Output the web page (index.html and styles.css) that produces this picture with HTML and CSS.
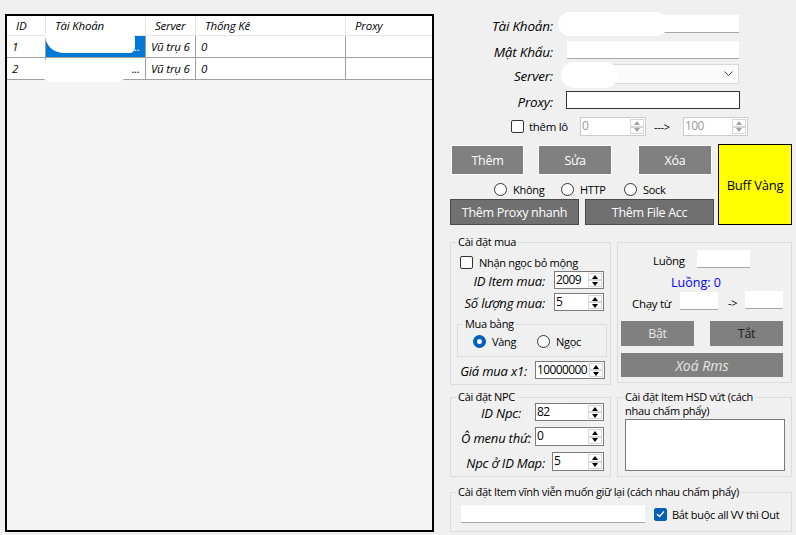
FILE: index.html
```html
<!DOCTYPE html>
<html lang="vi">
<head>
<meta charset="utf-8">
<title>Quản lý tài khoản</title>
<link rel="stylesheet" href="styles.css">
</head>
<body>
<div class="app">
  <div class="grid">
    <table class="dgv">
      <thead>
        <tr><th class="c-id">ID</th><th class="c-acc">Tài Khoản</th><th class="c-srv">Server</th><th class="c-st">Thống Kê</th><th class="c-px">Proxy</th></tr>
      </thead>
      <tbody>
        <tr><td>1</td><td class="acc sel"><span class="blob b1"></span><span class="ell">...</span></td><td>Vũ trụ 6</td><td>0</td><td></td></tr>
        <tr><td>2</td><td class="acc"><span class="blob b2"></span><span class="ell">...</span></td><td>Vũ trụ 6</td><td>0</td><td></td></tr>
      </tbody>
    </table>
  </div>

  <div class="panel">
    <div class="frow r1"><span class="flabel">Tài Khoản:</span><span class="field"><span class="blob b3"></span></span></div>
    <div class="frow r2"><span class="flabel">Mật Khẩu:</span><span class="field"></span></div>
    <div class="frow r3"><span class="flabel">Server:</span><span class="field combo"><span class="blob b4"></span><svg class="chev" width="9" height="6" viewBox="0 0 9 6"><polyline points="0.5,0.5 4.5,4.5 8.5,0.5" fill="none" stroke="#444" stroke-width="1"/></svg></span></div>
    <div class="frow r4"><span class="flabel">Proxy:</span><span class="field proxy"></span></div>

    <div class="lotrow">
      <span class="chk"></span><span class="lottext">thêm lô</span>
      <div class="num dis w66"><span class="nv">0</span><span class="spin"><i class="up"></i><i class="dn"></i></span></div>
      <span class="arrow">---&gt;</span>
      <div class="num dis w65"><span class="nv">100</span><span class="spin"><i class="up"></i><i class="dn"></i></span></div>
    </div>

    <div class="btnblock">
      <div class="btncol">
        <div class="brow1">
          <div class="btn b-gray bt-them">Thêm</div>
          <div class="btn b-gray bt-sua">Sửa</div>
          <div class="btn b-gray bt-xoa">Xóa</div>
        </div>
        <div class="radrow">
          <span class="ritem ri1"><span class="radio"></span>Không</span>
          <span class="ritem ri2"><span class="radio"></span>HTTP</span>
          <span class="ritem"><span class="radio"></span>Sock</span>
        </div>
        <div class="brow2">
          <div class="btn b-dark">Thêm Proxy nhanh</div>
          <div class="btn b-dark">Thêm File Acc</div>
        </div>
      </div>
      <div class="buff">Buff Vàng</div>
    </div>

    <div class="grow1">
      <fieldset class="grp g-mua">
        <legend>Cài đặt mua</legend>
        <div class="chkrow"><span class="chk"></span><span class="chklabel">Nhận ngọc bỏ mộng</span></div>
        <div class="lrow lr-id"><span class="ilabel w94">ID Item mua:</span><div class="num w50 ml9"><span class="nv">2009</span><span class="spin"><i class="up"></i><i class="dn"></i></span></div></div>
        <div class="lrow lr-sl"><span class="ilabel w94">Số lượng mua:</span><div class="num w50 ml9"><span class="nv">5</span><span class="spin"><i class="up"></i><i class="dn"></i></span></div></div>
        <fieldset class="grp g-muabang">
          <legend>Mua bằng</legend>
          <div class="mbrow">
            <span class="ritem mb1"><span class="radio on"></span>Vàng</span>
            <span class="ritem"><span class="radio"></span>Ngọc</span>
          </div>
        </fieldset>
        <div class="lrow lr-gia"><span class="ilabel w76">Giá mua x1:</span><div class="num w70 ml8"><span class="nv">10000000</span><span class="spin"><i class="up"></i><i class="dn"></i></span></div></div>
      </fieldset>

      <fieldset class="grp g-luong">
        <div class="lu-row1"><span class="lu-t">Luồng</span><span class="field w53"></span></div>
        <div class="lu-count">Luồng: 0</div>
        <div class="lu-row3"><span class="lu-chay">Chạy từ</span><span class="field w38 h18"></span><span class="lu-arr">-&gt;</span><span class="field w38 h18 up1"></span></div>
        <div class="lu-btns">
          <div class="btn b-flat t-light">Bật</div>
          <div class="btn b-flat t-dark ml16">Tắt</div>
        </div>
        <div class="btn b-flat t-light xrms">Xoá Rms</div>
      </fieldset>
    </div>

    <div class="grow2">
      <fieldset class="grp g-npc">
        <legend>Cài đặt NPC</legend>
        <div class="lrow nr1"><span class="ilabel w70">ID Npc:</span><div class="num w69 ml14"><span class="nv">82</span><span class="spin"><i class="up"></i><i class="dn"></i></span></div></div>
        <div class="lrow nr2"><span class="ilabel w80">Ô menu thứ:</span><div class="num w69 ml4"><span class="nv">0</span><span class="spin"><i class="up"></i><i class="dn"></i></span></div></div>
        <div class="lrow nr3"><span class="ilabel w94">Npc ở ID Map:</span><div class="num w52 ml7"><span class="nv">5</span><span class="spin"><i class="up"></i><i class="dn"></i></span></div></div>
      </fieldset>
      <fieldset class="grp g-hsd">
        <legend>Cài đặt Item HSD vứt (cách</legend>
        <div class="hsd-l2">nhau chấm phẩy)</div>
        <div class="textarea"></div>
      </fieldset>
    </div>

    <fieldset class="grp g-vv">
      <legend>Cài đặt Item vĩnh viễn muốn giữ lại (cách nhau chấm phẩy)</legend>
      <div class="vvrow">
        <span class="field vvin"></span>
        <span class="chk on"><svg width="9" height="8" viewBox="0 0 9 8"><polyline points="1,4 3.5,6.5 8,1.5" fill="none" stroke="#fff" stroke-width="1.3"/></svg></span>
        <span class="vvtext">Bắt buộc all VV thì Out</span>
      </div>
    </fieldset>
  </div>
</div>
</body>
</html>
```

FILE: styles.css
```css
* { box-sizing: border-box; }
html, body { margin: 0; padding: 0; }
body {
  width: 796px;
  height: 535px;
  overflow: hidden;
  background: #f0f0f0;
  font-family: "Open Sans", "Noto Sans", sans-serif;
  font-size: 11px;
  letter-spacing: -0.3px;
  color: #000;
}
.app { display: flex; align-items: flex-start; }

/* ---------- data grid ---------- */
.grid {
  margin: 14px 0 0 5px;
  width: 429px;
  height: 518px;
  border: 2px solid #000;
  background: #f4f4f4;
}
.dgv {
  border-collapse: separate;
  border-spacing: 0;
  table-layout: fixed;
  width: 425px;
  font-style: italic;
  font-size: 11.5px;
  letter-spacing: -0.2px;
}
.dgv th {
  height: 20px;
  background: #fff;
  font-weight: normal;
  text-align: left;
  padding: 0 0 0 9px;
  border-right: 1px solid #e5e5e5;
  border-bottom: 1px solid #e5e5e5;
  white-space: nowrap;
}
.dgv th.c-id { width: 39px; }
.dgv th.c-acc { width: 100px; }
.dgv th.c-srv { width: 50px; }
.dgv th.c-st { width: 150px; }
.dgv th.c-px { border-right: 0; }
.dgv td {
  height: 22px;
  background: #fff;
  padding: 0 0 0 5px;
  border-right: 1px solid #a0a0a0;
  border-bottom: 1px solid #a0a0a0;
  white-space: nowrap;
  overflow: visible;
}
.dgv td:last-child { border-right: 0; }
.dgv td.acc { position: relative; }
.dgv td.sel { background: #0078d7; color: #fff; }
.ell { position: absolute; right: 5px; top: 3px; }
.sel .ell { color: #fff; }
.blob { position: absolute; background: #fff; }
.b1 { left: -1px; top: -3px; width: 90px; height: 20px; border-radius: 4px 12px 12px 40px; }
.b2 { left: -6px; top: 0; width: 88px; height: 24px; border-radius: 12px; }
.b3 { left: -9px; top: -3px; width: 110px; height: 24px; border-radius: 12px; }
.b4 { left: -7px; top: -3px; width: 57px; height: 26px; border-radius: 13px; }

/* ---------- right panel ---------- */
.panel {
  margin-left: 11px;
  width: 352px;
  padding-top: 15px;
  display: flex;
  flex-direction: column;
}
.frow { display: flex; align-items: center; }
.r1 { height: 18px; }
.r2 { height: 18px; margin-top: 8px; }
.r3 { height: 20px; margin-top: 5px; }
.r4 { height: 18px; margin-top: 7px; }
.flabel {
  width: 108px;
  text-align: right;
  font-style: italic;
  font-size: 13.5px;
  letter-spacing: -0.2px;
  padding-top: 3px;
}
.field {
  display: block;
  position: relative;
  background: #fff;
  border-bottom: 1px solid #a8a8a8;
}
.frow .field { margin-left: 14px; width: 172px; height: 100%; }
.combo { background: #fbfbfb; border: 1px solid #d9d9d9; }
.chev { position: absolute; right: 5px; top: 6px; }
.frow .proxy { border: 1px solid #333; width: 174px; margin-left: 13px; }

.lotrow { display: flex; align-items: center; height: 19px; margin-top: 8px; }
.lotrow .chk { margin-left: 66px; }
.lottext { margin-left: 5px; width: 51px; font-size: 11.5px; }
.arrow { margin-left: 8px; width: 29px; }

.chk {
  width: 13px; height: 13px;
  border: 1px solid #333;
  border-radius: 2px;
  background: #fff;
  flex: none;
  display: flex; align-items: center; justify-content: center;
}
.chk.on { background: #005fb8; border-color: #005fb8; }

/* numeric up-down */
.num {
  display: flex;
  background: #fff;
  border: 1px solid #7a7a7a;
  height: 100%;
  flex: none;
}
.nv { flex: 1; padding-left: 1px; font-size: 12px; letter-spacing: -0.6px; line-height: 16px; white-space: nowrap; overflow: hidden; }
.spin { width: 15px; display: flex; flex-direction: column; padding: 1px 1px 1px 0; }
.spin i { flex: 1; border: 1px solid #d6d6d6; display: flex; align-items: center; justify-content: center; }
.spin i::after { content: ""; border-left: 3px solid transparent; border-right: 3px solid transparent; }
.spin i.up::after { border-bottom: 4px solid #000; }
.spin i.dn::after { border-top: 4px solid #000; }
.num.dis { border-color: #cccccc; }
.num.dis .nv { color: #9a9a9a; }
.num.dis .spin i.up::after { border-bottom-color: #a0a0a0; }
.num.dis .spin i.dn::after { border-top-color: #a0a0a0; }

.w38 { width: 38px; }
.w50 { width: 50px; }
.w52 { width: 52px; }
.w53 { width: 53px; }
.w65 { width: 65px; }
.w66 { width: 66px; }
.w69 { width: 69px; }
.w70 { width: 70px; }
.w76 { width: 76px; }
.w80 { width: 80px; }
.w94 { width: 94px; }
.ml4 { margin-left: 4px; }
.ml7 { margin-left: 7px; }
.ml8 { margin-left: 8px; }
.ml9 { margin-left: 9px; }
.ml14 { margin-left: 14px; }
.ml16 { margin-left: 16px; }
.h18 { height: 18px; }

/* buttons */
.btnblock { display: flex; margin-top: 8px; }
.btncol { width: 273px; }
.brow1 { display: flex; height: 30px; margin-top: 1px; }
.btn {
  display: flex; align-items: center; justify-content: center;
  font-size: 12.5px; white-space: nowrap;
}
.b-gray { background: #808080; border: 1px solid #fff; color: #fff; }
.bt-them { margin-left: 6px; width: 73px; }
.bt-sua { margin-left: 14px; width: 74px; }
.bt-xoa { margin-left: 26px; width: 74px; }
.radrow { display: flex; align-items: center; height: 14px; margin-top: 7px; padding-left: 49px; font-size: 11px; }
.ritem { display: flex; align-items: center; white-space: nowrap; }
.ri1 { width: 67px; }
.ri2 { width: 63px; }
.radio {
  width: 13px; height: 13px;
  border: 1px solid #333;
  border-radius: 50%;
  background: #fff;
  margin-right: 6px;
  flex: none;
}
.radio.on { background: #fff; border: 4px solid #005fb8; }
.brow2 { display: flex; gap: 6px; margin-top: 3px; padding-left: 5px; height: 26px; }
.b-dark { width: 129px; background: #707070; border: 1px solid #4a4a4a; color: #fff; }
.buff {
  width: 74px; height: 81px;
  background: #ffff00;
  border: 1px solid #000;
  display: flex; align-items: center; justify-content: center;
  font-size: 13px;
  letter-spacing: -0.2px;
}

/* group boxes */
.grp {
  margin: 0;
  padding: 0;
  border: 1px solid #dcdcdc;
  min-width: 0;
}
.grp legend {
  margin-left: 5px;
  padding: 0 2px;
  line-height: 14px;
  font-size: 11px;
  white-space: nowrap;
}
.grow1 { display: flex; align-items: flex-start; margin-top: 10px; }
.g-mua { margin-left: 5px; width: 161px; height: 150px; }
.chkrow { display: flex; align-items: center; height: 15px; margin-top: 6px; padding-left: 9px; }
.chklabel { margin-left: 6px; font-size: 11px; white-space: nowrap; }
.lrow { display: flex; align-items: center; height: 18px; }
.ilabel { text-align: right; font-style: italic; font-size: 13px; letter-spacing: -0.2px; padding-top: 2px; white-space: nowrap; }
.lr-id { margin-top: 1px; }
.lr-sl { margin-top: 4px; }
.g-muabang { margin: 6px 0 0 6px; width: 150px; height: 40px; }
.mbrow { display: flex; align-items: center; height: 14px; margin-top: 3px; padding-left: 15px; font-size: 11px; }
.mb1 { width: 64px; }
.lr-gia { margin-top: 4px; }

.g-luong { margin: 7px 0 0 6px; width: 175px; height: 141px; }
.lu-row1 { display: flex; align-items: center; height: 18px; margin-top: 7px; padding-left: 35px; }
.lu-t { width: 44px; padding-top: 3px; font-size: 11.5px; }
.lu-row1 .field { height: 18px; }
.lu-count { color: #0000ff; height: 16px; line-height: 16px; margin-top: 7px; padding-left: 53px; font-size: 12.5px; letter-spacing: 0; }
.lu-row3 { display: flex; align-items: center; height: 19px; padding-left: 14px; }
.lu-chay { width: 48px; padding-top: 5px; font-size: 11.5px; }
.lu-arr { margin-left: 10px; width: 17px; padding-top: 3px; }
.up1 { margin-top: -1px; }
.lu-btns { display: flex; height: 25px; margin-top: 11px; padding-left: 3px; }
.b-flat { background: #808080; width: 73px; }
.t-light { color: #e6e6e6; }
.t-dark { color: #1e1e1e; }
.xrms { margin: 7px 0 0 3px; width: 162px; height: 24px; font-style: italic; font-size: 14px; letter-spacing: 0; }

.grow2 { display: flex; align-items: flex-start; margin-top: 5px; }
.g-npc { margin-left: 5px; width: 161px; height: 87px; }
.nr1 { margin-top: -1px; }
.nr2 { margin-top: 6px; height: 19px; }
.nr3 { margin-top: 6px; height: 19px; }
.g-hsd { margin-left: 6px; width: 175px; height: 87px; }
.hsd-l2 { line-height: 14px; padding-left: 7px; font-size: 11px; white-space: nowrap; }
.textarea { margin: 1px 0 0 7px; width: 160px; height: 52px; background: #fff; border: 1px solid #7a7a7a; }

.g-vv { margin: 8px 0 0 5px; width: 342px; height: 47px; }
.vvrow { display: flex; align-items: center; height: 18px; margin-top: 6px; padding-left: 10px; }
.vvin { width: 184px; height: 18px; }
.vvrow .chk { margin-left: 9px; }
.vvtext { margin-left: 5px; font-size: 11px; white-space: nowrap; }
```
